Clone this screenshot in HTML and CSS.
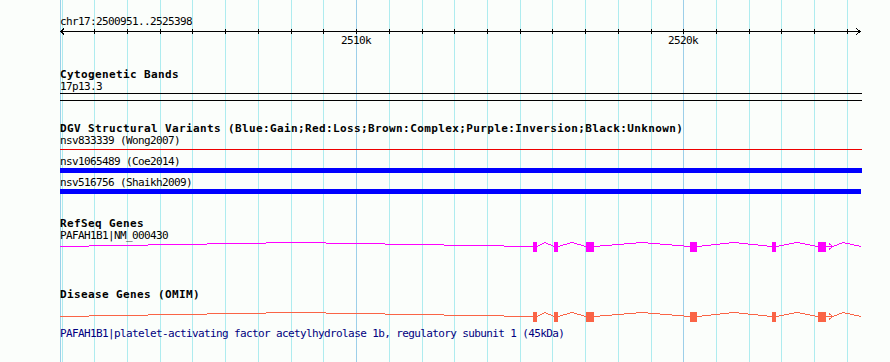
FILE: index.html
```html
<!DOCTYPE html>
<html lang="en">

<head>
    <meta charset="UTF-8">
    <title>chr17:2500951..2525398</title>
    <link rel="stylesheet" href="styles.css">
</head>

<body>
    <div class="page">
        <!-- grid lines behind the tracks -->
        <svg class="grid" width="890" height="362" shape-rendering="crispEdges">
            <g class="minor">
                <line x1="62.5" y1="0" x2="62.5" y2="362" />
                <line x1="94.5" y1="0" x2="94.5" y2="362" />
                <line x1="127.5" y1="0" x2="127.5" y2="362" />
                <line x1="160.5" y1="0" x2="160.5" y2="362" />
                <line x1="192.5" y1="0" x2="192.5" y2="362" />
                <line x1="225.5" y1="0" x2="225.5" y2="362" />
                <line x1="258.5" y1="0" x2="258.5" y2="362" />
                <line x1="291.5" y1="0" x2="291.5" y2="362" />
                <line x1="323.5" y1="0" x2="323.5" y2="362" />
                <line x1="389.5" y1="0" x2="389.5" y2="362" />
                <line x1="422.5" y1="0" x2="422.5" y2="362" />
                <line x1="454.5" y1="0" x2="454.5" y2="362" />
                <line x1="487.5" y1="0" x2="487.5" y2="362" />
                <line x1="520.5" y1="0" x2="520.5" y2="362" />
                <line x1="552.5" y1="0" x2="552.5" y2="362" />
                <line x1="585.5" y1="0" x2="585.5" y2="362" />
                <line x1="618.5" y1="0" x2="618.5" y2="362" />
                <line x1="651.5" y1="0" x2="651.5" y2="362" />
                <line x1="716.5" y1="0" x2="716.5" y2="362" />
                <line x1="749.5" y1="0" x2="749.5" y2="362" />
                <line x1="781.5" y1="0" x2="781.5" y2="362" />
                <line x1="814.5" y1="0" x2="814.5" y2="362" />
                <line x1="847.5" y1="0" x2="847.5" y2="362" />
            </g>
            <g class="major">
                <line x1="60.5" y1="0" x2="60.5" y2="362" />
                <line x1="356.5" y1="0" x2="356.5" y2="362" />
                <line x1="683.5" y1="0" x2="683.5" y2="362" />
            </g>
        </svg>

        <!-- ruler -->
        <div class="pos">chr17:2500951..2525398</div>
        <svg class="scale" width="802" height="22" viewBox="60 0 802 22">
            <g class="axis" shape-rendering="crispEdges">
                <line x1="60" y1="4.5" x2="861" y2="4.5" />
                <path d="M64 1.5 L60.5 4.5 L64 7.5 M856 1.5 L860.5 4.5 L856 7.5" />
                <path d="M62.5 2 V7 M94.5 2 V7 M127.5 2 V7 M160.5 2 V7 M192.5 2 V7 M225.5 2 V7 M258.5 2 V7 M291.5 2 V7 M323.5 2 V7 M356.5 2 V7 M389.5 2 V7 M422.5 2 V7 M454.5 2 V7 M487.5 2 V7 M520.5 2 V7 M552.5 2 V7 M585.5 2 V7 M618.5 2 V7 M651.5 2 V7 M683.5 2 V7 M716.5 2 V7 M749.5 2 V7 M781.5 2 V7 M814.5 2 V7 M847.5 2 V7" />
            </g>
            <text x="356" y="17" text-anchor="middle">2510k</text>
            <text x="683" y="17" text-anchor="middle">2520k</text>
        </svg>

        <!-- Cytogenetic Bands -->
        <div class="track cyto">
            <div class="title">Cytogenetic Bands</div>
            <div class="label">17p13.3</div>
            <svg class="bands" width="802" height="10" viewBox="60 0 802 10" shape-rendering="crispEdges">
                <line x1="60" y1="1.5" x2="862" y2="1.5" />
                <line x1="60" y1="8.5" x2="862" y2="8.5" />
            </svg>
        </div>

        <!-- DGV Structural Variants -->
        <div class="track dgv">
            <div class="title">DGV Structural Variants (Blue:Gain;Red:Loss;Brown:Complex;Purple:Inversion;Black:Unknown)</div>
            <div class="label">nsv833339 (Wong2007)</div>
            <svg class="sv" width="802" height="9" viewBox="60 0 802 9" shape-rendering="crispEdges">
                <line class="loss" x1="60" y1="3.5" x2="862" y2="3.5" />
            </svg>
            <div class="label">nsv1065489 (Coe2014)</div>
            <svg class="sv" width="802" height="9" viewBox="60 0 802 9" shape-rendering="crispEdges">
                <rect class="gain" x="60" y="1" width="802" height="5" />
            </svg>
            <div class="label">nsv516756 (Shaikh2009)</div>
            <svg class="sv" width="802" height="9" viewBox="60 0 802 9" shape-rendering="crispEdges">
                <rect class="gain" x="60" y="1" width="801" height="5" />
            </svg>
        </div>

        <!-- RefSeq Genes -->
        <div class="track refseq">
            <div class="title">RefSeq Genes</div>
            <div class="label">PAFAH1B1|NM_000430</div>
            <svg class="gene" width="802" height="12" viewBox="60 0 802 12" shape-rendering="crispEdges">
                <path class="intron" d="M60 5.5 L296 1.5 L533 5.5 M537 5.5 L545 1.5 L554 5.5 M558 5.5 L572 1.5 L586 5.5 M594 5.5 L642 1.5 L690 5.5 M697 5.5 L734 1.5 L772 5.5 M776 5.5 L797 1.5 L818 5.5 M826 5.5 L833 5.5 L843 1.5 L861 5.5 M829 2.5 L833 5.5 L829 8.5" />
                <rect x="533" y="1" width="4" height="10" />
                <rect x="554" y="1" width="4" height="10" />
                <rect x="586" y="1" width="8" height="10" />
                <rect x="690" y="1" width="7" height="10" />
                <rect x="772" y="1" width="4" height="10" />
                <rect x="818" y="1" width="8" height="10" />
            </svg>
        </div>

        <!-- Disease Genes (OMIM) -->
        <div class="track omim">
            <div class="title">Disease Genes (OMIM)</div>
            <svg class="gene" width="802" height="12" viewBox="60 0 802 12" shape-rendering="crispEdges">
                <path class="intron" d="M60 5.5 L296 1.5 L533 5.5 M537 5.5 L545 1.5 L554 5.5 M558 5.5 L572 1.5 L586 5.5 M594 5.5 L642 1.5 L690 5.5 M697 5.5 L734 1.5 L772 5.5 M776 5.5 L797 1.5 L818 5.5 M826 5.5 L833 5.5 L843 1.5 L861 5.5 M829 2.5 L833 5.5 L829 8.5" />
                <rect x="533" y="1" width="4" height="10" />
                <rect x="554" y="1" width="4" height="10" />
                <rect x="586" y="1" width="8" height="10" />
                <rect x="690" y="1" width="7" height="10" />
                <rect x="772" y="1" width="4" height="10" />
                <rect x="818" y="1" width="8" height="10" />
            </svg>
            <div class="label desc">PAFAH1B1|platelet-activating factor acetylhydrolase 1b, regulatory subunit 1 (45kDa)</div>
        </div>
    </div>
</body>

</html>
```

FILE: styles.css
```css
* {
    margin: 0;
    padding: 0;
}

body {
    background: #fbfefb;
}

.page {
    position: relative;
    z-index: 0;
    width: 890px;
    height: 362px;
    box-sizing: border-box;
    padding: 15px 0 0 60px;
    overflow: hidden;
    background: #fbfefb;
    font-family: "DejaVu Sans Mono", "Liberation Mono", monospace;
    font-size: 11px;
    line-height: 12px;
    color: #000;
}

/* grid lines */
.grid {
    position: absolute;
    left: 0;
    top: 0;
    z-index: -1;
}

.grid .minor line {
    stroke: #aeecef;
    stroke-width: 1;
}

.grid .major line {
    stroke: #9ccfe9;
    stroke-width: 1;
}

svg {
    display: block;
}

/* ruler */
.pos {
    height: 11px;
    padding-top: 1px;
    letter-spacing: -0.62px;
    white-space: nowrap;
}

.axis line,
.axis path {
    stroke: #000;
    stroke-width: 1;
    fill: none;
}

.scale text {
    font-family: "DejaVu Sans Mono", "Liberation Mono", monospace;
    font-size: 11px;
    letter-spacing: -0.62px;
    fill: #000;
}

/* tracks */
.title {
    font-weight: bold;
    letter-spacing: 0.38px;
    white-space: nowrap;
    height: 11px;
    padding-top: 1px;
}

.label {
    letter-spacing: -0.62px;
    white-space: nowrap;
    height: 11px;
    padding-top: 1px;
}

.cyto {
    margin-top: 19px;
}

.bands line {
    stroke: #000;
    stroke-width: 1;
}

.dgv {
    margin-top: 20px;
}

.loss {
    stroke: #ee0000;
    stroke-width: 1;
}

.gain {
    fill: #0000ff;
}

.refseq {
    margin-top: 20px;
}

.gene .intron {
    fill: none;
    stroke-width: 1;
}

.refseq .gene .intron {
    stroke: #ff00ff;
}

.refseq .gene rect {
    fill: #ff00ff;
}

.omim {
    margin-top: 35px;
}

.omim .gene {
    margin-top: 11px;
}

.omim .gene .intron {
    stroke: #fa6446;
}

.omim .gene rect {
    fill: #fa6446;
}

.desc {
    margin-top: 4px;
    color: #000080;
}
```
